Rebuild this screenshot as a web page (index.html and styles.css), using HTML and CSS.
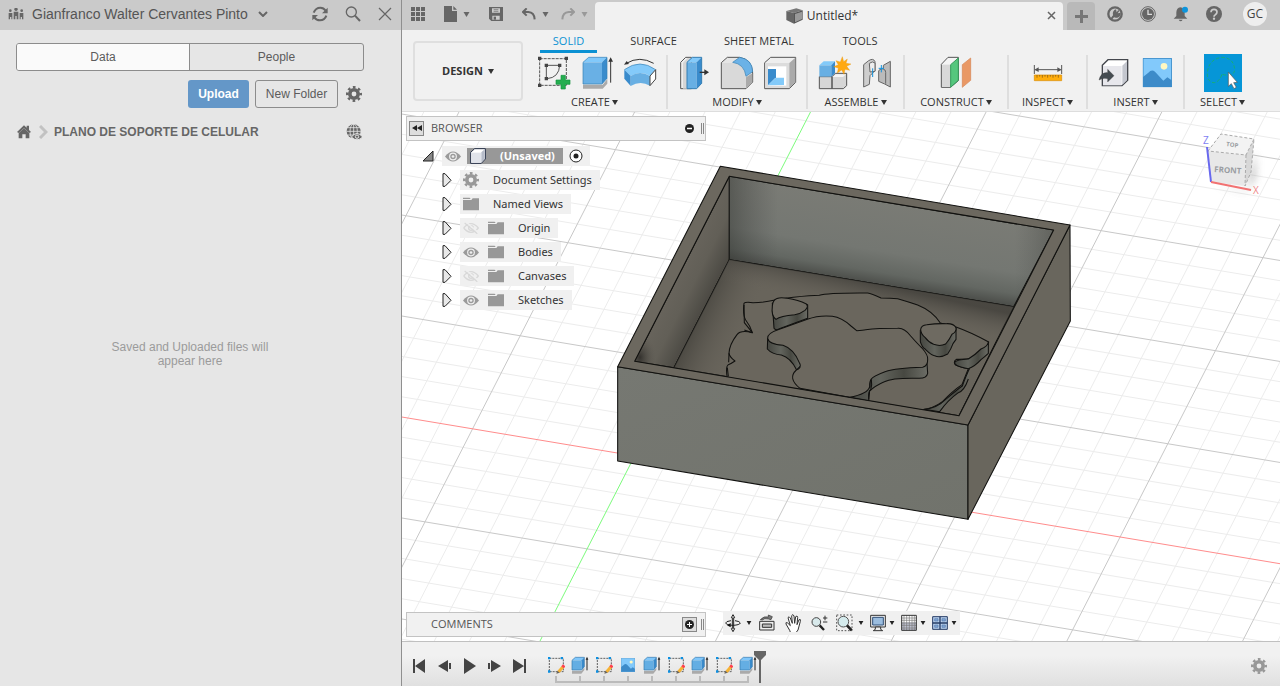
FILE: index.html
```html
<!DOCTYPE html>
<html lang="en">
<head>
<meta charset="utf-8">
<meta name="viewport" content="width=device-width, initial-scale=1">
<title>Untitled*</title>
<link rel="stylesheet" href="styles.css">
</head>
<body>
<svg class="sprite" aria-hidden="true">
  <symbol id="caret" viewBox="0 0 6 5"><path d="M0 0h6L3 5z" fill="currentColor"/></symbol>
  <symbol id="gear" viewBox="0 0 16 16"><g fill="none" stroke="currentColor"><circle cx="8" cy="8" r="4.2" stroke-width="3.6"/><circle cx="8" cy="8" r="6.8" stroke-width="2.4" stroke-dasharray="2.67 2.67" stroke-dashoffset="1.33"/></g></symbol>
  <symbol id="eye" viewBox="0 0 48 32"><path d="M0 16Q24-14 48 16Q24 46 0 16z" fill="#9a9a9a"/><circle cx="24" cy="16" r="10" fill="none" stroke="#f0f0f0" stroke-width="3.5"/><circle cx="24" cy="16" r="4" fill="#eee"/></symbol>
  <symbol id="eye-off" viewBox="0 0 48 36"><g fill="none" stroke="#d8d8d8" stroke-width="4"><path d="M2 18Q24-8 46 18Q24 44 2 18M5 3l38 32"/><circle cx="24" cy="18" r="7"/></g><path d="M9 0l38 32" stroke="#f0f0f0" stroke-width="4"/></symbol>
  <symbol id="folder" viewBox="0 0 48 40"><path d="M0 1h20l3 4H0zM0 8h25l4-5h19v36H0z" fill="#989898"/></symbol>
  <symbol id="expand" viewBox="0 0 30 42"><path d="M3 2h6l18 20L9 40H3z" fill="#e8e8e8" stroke="#222" stroke-width="3"/></symbol>
  <symbol id="sketch" viewBox="0 0 54 54"><path d="M7 7h42v40H7z" fill="none" stroke="#444" stroke-width="2.5" stroke-dasharray="6 3"/><path d="M3 3h7v7H3zM41 3h7v7h-7zM3 43h7v7H3z" fill="#0c8fe0"/><path d="M31 45l15-17 7 6-15 16-9 2z" fill="#f5b335"/><path d="M43 31l5-6 7 6-5 6z" fill="#ff4050"/><path d="M31 44l7 6-10 3z" fill="#666"/></symbol>
  <symbol id="extrude" viewBox="0 0 54 54"><path d="M3 45h28l9-9v6l-9 11H3z" fill="#aaa"/><path d="M3 13l10-9h27l-8 9z" fill="#80c7fb"/><path d="M3 13h29v29H3z" fill="#64aee3"/><path d="M32 13l8-9v28l-8 10z" fill="#398bcc"/><path d="M3 13l10-9h27v28l-8 10H3z" fill="none" stroke="#3578ae" stroke-width="2"/><path d="M48 43V8" stroke="#222" stroke-width="3"/><path d="M44 11l4-9 4 9z" fill="#222"/></symbol>
  <symbol id="picture" viewBox="0 0 88 88"><path d="M1 1h86v86H1z" fill="#82c9fb"/><path d="M1 57l16-13q10-12 20-3l25 27 12-10 13 9v20H1z" fill="#3d8bc9"/><circle cx="64" cy="25" r="10" fill="#fff8c2"/><path d="M1 1h86v86H1z" fill="none" stroke="#398bc9" stroke-width="3"/></symbol>
</svg>

<div class="app">
  <aside class="data-panel">
    <header class="data-header">
      <button class="team" type="button">
        <svg width="16" height="12" viewBox="24 24 48 36"><g fill="#666"><circle cx="48" cy="28" r="5"/><circle cx="31" cy="32" r="4"/><circle cx="65" cy="32" r="4"/><path d="M41 35h14v23h-5V48h-4v10h-5zM26 39h11v19h-3v-7h-4v7h-4zM59 39h11v19h-4v-7h-4v7h-3z"/></g></svg>
        <span>Gianfranco Walter Cervantes Pinto</span>
        <svg class="chevron" width="10" height="6" viewBox="0 0 10 6"><path d="M1 1l4 4 4-4" fill="none" stroke="#666" stroke-width="2"/></svg>
      </button>
      <button class="bare" type="button" aria-label="Refresh"><svg width="16" height="16" viewBox="0 0 48 48"><g fill="none" stroke="#666" stroke-width="6"><path d="M5 20Q11 5 25 5Q35 5 41 14M43 29Q38 43 24 43Q13 43 7 34"/></g><path d="M47 5v17H30zM1 43V27h17z" fill="#666"/></svg></button>
      <button class="bare" type="button" aria-label="Search"><svg width="16" height="16" viewBox="0 0 48 48"><g fill="none" stroke="#666"><circle cx="19" cy="18" r="15" stroke-width="4"/><path d="M30 29l15 16" stroke-width="6"/></g></svg></button>
      <button class="bare" type="button" aria-label="Close"><svg width="14" height="14" viewBox="0 0 14 14"><path d="M1 1l12 12M13 1L1 13" stroke="#666" stroke-width="1.2"/></svg></button>
    </header>
    <div class="data-body">
      <div class="segments"><button class="active" type="button">Data</button><button type="button">People</button></div>
      <div class="actions">
        <button class="upload" type="button">Upload</button>
        <button class="new-folder" type="button">New Folder</button>
        <button class="bare" type="button" aria-label="Settings"><svg class="dark-gear" width="16" height="16"><use href="#gear"/></svg></button>
      </div>
      <nav class="crumbs">
        <a href="#" aria-label="Home"><svg width="14" height="14" viewBox="50 376 42 42"><path d="M50 397l21-20 8 7v-6h7v13l6 6-5 3-16-15-16 15zM55 401l16-15 16 15v15H76v-12H66v12H55z" fill="#666"/></svg></a>
        <svg width="9" height="14" viewBox="0 0 9 14"><path d="M1 1l6 6-6 6" fill="none" stroke="#c2c2c2" stroke-width="3"/></svg>
        <a class="crumb" href="#">PLANO DE SOPORTE DE CELULAR</a>
        <button class="bare" type="button" aria-label="Web view"><svg width="16" height="16" viewBox="0 0 48 48"><circle cx="23" cy="22" r="21" fill="#666"/><g fill="none" stroke="#e6e6e6" stroke-width="2.4"><path d="M23 0v44M1 22h44M5 11h36M5 33h36"/><ellipse cx="23" cy="22" rx="11" ry="22"/></g><path d="M16 39Q33 18 50 39Q33 56 16 39z" fill="#666" stroke="#e6e6e6" stroke-width="3"/><circle cx="33" cy="38" r="5" fill="none" stroke="#e6e6e6" stroke-width="3"/></svg></button>
      </nav>
      <p class="empty">Saved and Uploaded files will<br>appear here</p>
    </div>
  </aside>

  <main class="workspace">
    <header class="topbar">
      <div class="quick">
        <button class="bare q-grid" type="button" aria-label="Data panel"><svg width="14" height="14" viewBox="0 0 14 14"><path d="M0 0h4v4H0zM5 0h4v4H5zM10 0h4v4h-4zM0 5h4v4H0zM5 5h4v4H5zM10 5h4v4h-4zM0 10h4v4H0zM5 10h4v4H5zM10 10h4v4h-4z" fill="#666"/></svg></button>
        <button class="bare q-file" type="button" aria-label="File"><svg width="13" height="16" viewBox="0 0 39 48"><path d="M0 0h24v15h15v33H0zM28 0l11 11H28z" fill="#666"/></svg><svg width="7" height="5"><use href="#caret"/></svg></button>
        <button class="bare q-save" type="button" aria-label="Save"><svg width="14" height="14" viewBox="0 0 42 42"><path d="M0 0h42v42H7l-7-7z" fill="#666"/><path d="M9 4h24v13H9zM10 26h22v12H10z" fill="#ccc"/><path d="M14 8h14M14 13h14" stroke="#666" stroke-width="2"/><path d="M14 29h7v9h-7z" fill="#666"/></svg></button>
        <button class="bare q-undo" type="button" aria-label="Undo"><svg width="14" height="12" viewBox="0 0 42 36"><path d="M14 1L3 12l11 11M4 12h15q18 1 19 22" fill="none" stroke="#666" stroke-width="6"/></svg><svg width="7" height="5"><use href="#caret"/></svg></button>
        <button class="bare q-redo" type="button" aria-label="Redo"><svg width="14" height="12" viewBox="0 0 42 36"><path d="M28 1l11 11-11 11M38 12H23Q5 13 4 34" fill="none" stroke="#999" stroke-width="6"/></svg><svg width="7" height="5"><use href="#caret"/></svg></button>
      </div>
      <div class="doc-tab">
        <svg width="17" height="16" viewBox="0 0 51 48"><path d="M1 9L31 1l19 6-26 8z" fill="#777"/><path d="M1 9l23 6v32L1 36z" fill="#666"/><path d="M24 15l26-8v28L24 47z" fill="#555"/><path d="M27 18l21-7v22l-21 10z" fill="#999"/></svg>
        <span>Untitled*</span>
        <button class="bare doc-close" type="button" aria-label="Close document"><svg width="9" height="9" viewBox="0 0 9 9"><path d="M1 1l7 7M8 1L1 8" stroke="#666" stroke-width="1.5"/></svg></button>
      </div>
      <button class="new-tab" type="button" aria-label="New design"><svg width="13" height="13" viewBox="0 0 13 13"><path d="M6.500 0v13M0 6.500h13" stroke="#777" stroke-width="3"/></svg></button>
      <div class="account">
        <button class="bare" type="button" aria-label="Extensions"><svg width="16" height="16" viewBox="0 0 48 48"><circle cx="24" cy="24" r="20" fill="none" stroke="#666" stroke-width="7"/><path d="M9 39l9-11q-3-14 9-18l2 9 5-7 3 3-5 7 9-2q1 12-10 15-7 1-10-1l-7 8z" fill="#666"/></svg></button>
        <button class="bare" type="button" aria-label="Job status"><svg width="16" height="16" viewBox="0 0 48 48"><circle cx="24" cy="24" r="22" fill="none" stroke="#666" stroke-width="3"/><circle cx="24" cy="24" r="18" fill="#666"/><path d="M24 11v14h12" fill="none" stroke="#ddd" stroke-width="4"/></svg></button>
        <button class="bare" type="button" aria-label="Notifications"><svg width="16" height="16" viewBox="0 0 48 48"><path d="M2 38l8-8V19Q11 5 22 4Q34 5 35 19v11l8 8zM17 41h12q-6 9-12 0" fill="#666"/><circle cx="36" cy="11" r="9" fill="#0c94dc"/></svg></button>
        <button class="bare" type="button" aria-label="Help"><svg width="16" height="16" viewBox="0 0 48 48"><circle cx="24" cy="24" r="24" fill="#666"/><path d="M15 19q0-9 9-9t9 8q0 5-5 8-4 2-4 6" fill="none" stroke="#ccc" stroke-width="5"/><circle cx="24" cy="38" r="3.500" fill="#ccc"/></svg></button>
        <button class="avatar" type="button">GC</button>
      </div>
    </header>

    <section class="ribbon">
      <button class="design" type="button">DESIGN <svg width="6" height="5"><use href="#caret"/></svg></button>
      <div class="tools">
        <nav class="modes">
          <button class="mode active" type="button">SOLID</button><button class="mode" type="button">SURFACE</button><button class="mode wide" type="button">SHEET METAL</button><button class="mode narrow" type="button">TOOLS</button>
        </nav>
        <div class="panels">
          <div class="panel create">
            <div class="icons">
              <svg viewBox="405 165 108 108"><path d="M416 176h80v80h-80z" fill="none" stroke="#555" stroke-width="3" stroke-dasharray="9 3"/><path d="M436 196h40M436 196v40M476 196q-2 37-38 40" fill="none" stroke="#555" stroke-width="3"/><path d="M411 170h10v10h-10zM491 170h10v10h-10zM411 251h10v10h-10zM431 191h10v10h-10zM471 191h10v10h-10zM431 231h10v10h-10z" fill="#444"/><path d="M465 240h15v-14h13v14h14v13h-14v14h-13v-14h-15z" fill="#25ae50" stroke="#169441" stroke-width="2"/></svg>
              <svg viewBox="531 165 108 108"><path d="M543 254h59l14-17v14l-14 15h-59z" fill="#aaa"/><path d="M543 187l17-15h55l-15 15z" fill="#81c9fb"/><path d="M543 187h57v65h-57z" fill="#69b0e5"/><path d="M600 187l15-15v63l-15 17z" fill="#3a8ccc"/><path d="M543 187l17-15h55v63l-15 17h-57z" fill="none" stroke="#347eb4" stroke-width="2"/><path d="M626 248v-70" stroke="#333" stroke-width="3"/><path d="M619 185l7-13 7 13z" fill="#333"/></svg>
              <svg viewBox="663 165 108 108"><path d="M676 190q40-24 82 0" fill="none" stroke="#333" stroke-width="3"/><path d="M669 194l8-11 7 9z" fill="#333"/><path d="M670 209q47-34 94 0l-17 19q-27-18-58 0z" fill="#84cafa"/><path d="M670 209l19 19v30l-19-22z" fill="#398bcc"/><path d="M689 228q28-18 58 0v29q-29-17-58 1z" fill="#68afe3"/><path d="M670 209q47-34 94 0" fill="none" stroke="#347eb4" stroke-width="2"/><path d="M747 228l17-19v28l-17 20z" fill="#fff" stroke="#444" stroke-width="3"/></svg>
            </div>
            <button class="menu" type="button">CREATE <svg width="6" height="5"><use href="#caret"/></svg></button>
          </div>
          <div class="panel modify">
            <div class="icons">
              <svg viewBox="822 165 108 108"><path d="M836 187l15-15h17v94h-32z" fill="#eee" stroke="#555" stroke-width="3"/><path d="M843 188l14-14h11v92h-25z" fill="#d5d5d5"/><path d="M855 187l16-15h28l-15 15z" fill="#84cafa"/><path d="M855 187h29v79h-29z" fill="#67afe4"/><path d="M884 187l15-15v78l-15 16z" fill="#398bcc"/><path d="M855 187l16-15h28v78l-15 16h-29z" fill="none" stroke="#347eb4" stroke-width="3"/><path d="M893 217h20" stroke="#333" stroke-width="4"/><path d="M907 208l14 9-14 9z" fill="#333"/></svg>
              <svg viewBox="954 165 108 108"><path d="M961 188l18-16h36q38 5 40 47v27l-20 20h-74z" fill="#e5e5e5" stroke="#555" stroke-width="3"/><path d="M963 189h34q36 2 38 38v37h-72z" fill="#d9d9d9"/><path d="M1035 232l19-12v26l-19 19z" fill="#aaa"/><path d="M995 187l21-15q38 6 39 43l-20 14q-5-37-40-42" fill="#6bb2e7" stroke="#347eb4" stroke-width="2"/></svg>
              <svg viewBox="1083 165 108 108"><path d="M1091 188l18-16h75v75l-19 19h-74z" fill="#eee" stroke="#555" stroke-width="3"/><path d="M1093 189h72v75h-72z" fill="#dcdcdc"/><path d="M1165 189l18-16v74l-18 18z" fill="#aaa"/><path d="M1101 199h55v58h-55z" fill="#fff"/><path d="M1101 207h24v25l-24 24z" fill="#398bcc"/><path d="M1101 256l23-23h25v22z" fill="#83caf9"/></svg>
            </div>
            <button class="menu" type="button">MODIFY <svg width="6" height="5"><use href="#caret"/></svg></button>
          </div>
          <div class="panel assemble">
            <div class="icons">
              <svg viewBox="1242 165 108 108"><path d="M1252 230h38v36h-38zM1290 230l10-10h34v37l-10 9h-34z" fill="#d6d6d6" stroke="#555" stroke-width="3"/><path d="M1292 231l9-8h31l-9 8z" fill="#f4f4f4"/><path d="M1252 196l13-12h34l-11 12z" fill="#83caf9"/><path d="M1252 196h36v34h-36z" fill="#68afe3"/><path d="M1288 196l11-12v36l-11 10z" fill="#398bcc"/><path d="M1321 170l4 15 11-8-4 13 15 2-13 7 9 12-14-3-3 15-7-13-13 9 3-15-14-4 14-6-7-12 13 4z" fill="#ffa912" stroke="#e89100"/></svg>
              <svg viewBox="60 165 108 108"><g stroke="#666" stroke-width="3"><path d="M74 194l15-12q14-9 19 3v27l-15 15-2 26-17 8z" fill="#cecece"/><path d="M91 190q10-8 17-1v25l-15 2z" fill="#eee"/><path d="M119 213q0-6 14-7v-10l21-12v77l-17-9-18-8z" fill="#bbb"/><path d="M133 208q7 0 7 9v34" fill="none"/></g><path d="M101 231v-26M127 217v-22M119 205h16" stroke="#1592dc" stroke-width="3"/></svg>
            </div>
            <button class="menu" type="button">ASSEMBLE <svg width="6" height="5"><use href="#caret"/></svg></button>
          </div>
          <div class="panel construct">
            <div class="icons"><svg viewBox="297 165 108 108"><path d="M307 193l20-21h31v70l-24 20h-27z" fill="#f4f4f4" stroke="#555" stroke-width="3"/><path d="M309 194h25v67h-25z" fill="#d8d8d8"/><path d="M335 194l23-20v67l-23 21z" fill="#55c77d" stroke="#35995a" stroke-width="3"/><path d="M370 194l25-20v67l-25 21z" fill="#e99865" stroke="#d78451" stroke-width="2"/></svg></div>
            <button class="menu" type="button">CONSTRUCT <svg width="6" height="5"><use href="#caret"/></svg></button>
          </div>
          <div class="panel inspect">
            <div class="icons"><svg viewBox="570 165 108 108"><path d="M583 195v27M665 195v27M587 209h74" stroke="#555" stroke-width="3"/><path d="M583 209l13-7v14zM665 209l-13-7v14z" fill="#555"/><path d="M583 225h82v17h-82z" fill="#ffad0c" stroke="#d98d00" stroke-width="2"/><path d="M591 225v8M599 225v5M607 225v8M615 225v5M623 225v8M631 225v5M639 225v8M647 225v5M655 225v8" stroke="#735019" stroke-width="2"/></svg></div>
            <button class="menu" type="button">INSPECT <svg width="6" height="5"><use href="#caret"/></svg></button>
          </div>
          <div class="panel insert">
            <div class="icons">
              <svg viewBox="774 165 108 108"><path d="M793 196l17-17h59v62l-17 16h-59z" fill="#fff" stroke="#44474d" stroke-width="4"/><path d="M795 198h56v58h-56z" fill="#e7e7ec"/><path d="M853 197l14-14v57l-14 14z" fill="#c4c7cf"/><path d="M783 240q6-24 26-22v-10l19 19-19 19v-10q-15-3-26 4" fill="#444b51" stroke="#333"/></svg>
              <svg viewBox="898 165 108 108"><use href="#picture" x="909" y="174" width="88" height="88"/></svg>
            </div>
            <button class="menu" type="button">INSERT <svg width="6" height="5"><use href="#caret"/></svg></button>
          </div>
          <div class="panel select">
            <div class="icons"><svg class="select-icon" viewBox="1089 162 114 114"><path d="M1089 162h114v114h-114z" fill="#0696d7"/><path d="M1143 223q-9 24-24 25-20-1-20-28 3-42 43-48 37 1 39 38-3 22-38 13" fill="none" stroke="#16ae77" stroke-width="3" stroke-dasharray="10 6"/><path d="M1162 216v43l9-8 8 15 7-4-8-14 11-1z" fill="#fff" stroke="#555" stroke-width="2"/></svg></div>
            <button class="menu" type="button">SELECT <svg width="6" height="5"><use href="#caret"/></svg></button>
          </div>
        </div>
      </div>
    </section>

    <section class="viewport">
      <svg class="scene" viewBox="402 112 878 529" preserveAspectRatio="xMidYMid slice" aria-label="Model view">
        <defs>
          <linearGradient id="back" gradientUnits="userSpaceOnUse" x1="880" y1="155" x2="840" y2="405"><stop offset="0" stop-color="#7a7b75"/><stop offset=".6" stop-color="#747772"/><stop offset=".85" stop-color="#636762"/><stop offset="1" stop-color="#4b4d49"/></linearGradient>
          <linearGradient id="backEdge" x1="0" x2="1"><stop offset="0" stop-color="#30322e" stop-opacity=".45"/><stop offset=".15" stop-color="#444" stop-opacity="0"/><stop offset=".88" stop-color="#444" stop-opacity="0"/><stop offset="1" stop-color="#292b27" stop-opacity=".3"/></linearGradient>
          <linearGradient id="left" gradientUnits="userSpaceOnUse" x1="230" y1="350" x2="350" y2="410"><stop offset="0" stop-color="#69655d"/><stop offset=".5" stop-color="#625f57"/><stop offset="1" stop-color="#4a4842"/></linearGradient>
          <linearGradient id="floorL" gradientUnits="userSpaceOnUse" x1="300" y1="490" x2="430" y2="550"><stop offset="0" stop-color="#44423c" stop-opacity=".75"/><stop offset="1" stop-color="#66625a" stop-opacity="0"/></linearGradient>
          <linearGradient id="floorB" gradientUnits="userSpaceOnUse" x1="820" y1="400" x2="800" y2="490"><stop offset="0" stop-color="#42403b" stop-opacity=".8"/><stop offset="1" stop-color="#66625a" stop-opacity="0"/></linearGradient>
          <linearGradient id="front" x1="0" y1="0" x2="1" y2="1"><stop offset="0" stop-color="#767872"/><stop offset="1" stop-color="#71736c"/></linearGradient>
          <linearGradient id="edge" x1="0" x2="1"><stop offset="0" stop-color="#454640"/><stop offset=".4" stop-color="#62645d"/><stop offset=".7" stop-color="#474841"/><stop offset="1" stop-color="#6c6d66"/></linearGradient>
          <radialGradient id="corner"><stop offset="0" stop-color="#33312d"/><stop offset="1" stop-color="#5d5a52" stop-opacity="0"/></radialGradient>
          <clipPath id="inside"><path d="M388 79l973 161-284 557-973-163z"/></clipPath>
          <filter id="soft" x="-50%" y="-50%" width="200%" height="200%"><feGaussianBlur stdDeviation="4"/></filter>
        </defs>
        <path d="M402 112h878v529H402z" fill="#fff"/>
        <g id="grid"></g>
        <path d="M394 415.700l886 148" stroke="#ff8c8c" fill="none"/>
        <path d="M810.500 112L539 643" stroke="#7cfb7c" fill="none"/>
        <g transform="translate(600 150) scale(.33333)" stroke="#11110f" stroke-width="3.200" stroke-linejoin="round">
          <path d="M53 650l1051 175v283L53 933z" fill="url(#front)"/>
          <path d="M1104 825l306-600 1 288-307 595z" fill="#69665d"/>
          <path d="M361 49l1049 176-306 600L53 650z" fill="#6c685f"/>
          <g clip-path="url(#inside)">
            <path d="M104 634L388 79v250L222 653z" fill="url(#left)"/>
            <ellipse cx="120" cy="622" rx="48" ry="70" fill="url(#corner)" stroke="none"/>
            <path d="M388 79l973 161-120 230-853-141z" fill="url(#back)"/>
            <path d="M388 79l973 161-120 230-853-141z" fill="url(#backEdge)" stroke="none"/>
            <path d="M388 329l853 141-164 327-855-144z" fill="#68645b"/>
            <path d="M388 329l853 141-164 327-855-144z" fill="url(#floorL)" stroke="none"/>
            <path d="M388 329l853 141-164 327-855-144z" fill="url(#floorB)" stroke="none"/>
            <g transform="translate(360 390)">
              <path d="M22 295q-6-35 3-41 10-4 20-11-16-12-18-23 1-26 24-56 11-15 46-6-7-22-20-38-9-15-5-50 3-5 27-2 30 0 66-8 25-5 55-8 55-6 78-6 25-8 145-7 11 1 40 15 30 0 50 2 35 10 60 19 45 18 68 54l47 12q45 16 98 45-2 17-12 25-25 18-38 23-19 5-47 4-12 8 0 18 16 7 36 10-6 15-19 48-27 18-60 52-25 20-65 25l-350-60z" fill="#6a665d"/>
              <path d="M72 75l1 53 24 30-24-8M27 220l-1 27M22 263l3 27" fill="none"/>
              <path d="M805 186v34q-13 12-22 19-19 21-38 27-45-8-41-19 5-8 41-10 20-12 38-30 20-8 22-21z" fill="url(#edge)"/>
              <path d="M745 297q-12 35-30 41-32 23-56 57l-47-7q40-4 65-30 38-32 50-40 12-33 22-53" fill="url(#edge)"/>
              <path d="M157 70l5 75q5 8 20 0l81-30V74z" fill="url(#edge)"/>
              <path d="M162 62q10-13 40-7 33 5 57 17 8 8-4 19-13 10-31 13-42 3-56 14-15-10-11-40 1-11 5-16z" fill="#6e6a61"/>
              <path d="M143 175l-1 32q14 16 42 18 28 8 46 45l12-12v-83z" fill="url(#edge)"/>
              <path d="M620 235l3 45q-3 15-25 15-80-2-105 10-28 12-44 28l-3 30-60-11 64-30v-87z" fill="url(#edge)"/>
              <path d="M240 325q-38-30-11-55 17-7 10-20-18-44-50-54-43-4-46-21-2-15 31-26l88-31q35-13 75-9 28 4 56 29l17 14q20-1 27-3 35-4 96-4 20-2 39 23 22 25 34 36 19 22 17 34 1 20-15 24-80 2-113 13-37 14-40 21-7 8-6 24-5 22-61 32z" fill="#6c685f"/>
              <path d="M446 358q-2-25 6-28 5-15 2-32" fill="none"/>
              <path d="M601 151v34q5 17 15 23 20 19 28 19 16 8 39-5 10-14 16-31l9-13v-34z" fill="url(#edge)"/>
              <path d="M602 148q2-13 18-14 30-4 59-3 22-1 29 12 2 13-12 20-8 17-19 29-17 8-36 1-15-6-26-21-13-10-13-24z" fill="#6e6a61"/>
            </g>
          </g>
          <path d="M388 79l973 161-284 557-973-163z" fill="none"/>
        </g>
      </svg>

      <svg class="viewcube" width="70" height="72" viewBox="1200 130 70 72" aria-label="View cube">
        <path d="M1212 184l35 7 8-40v26l-9 15z" fill="#777" opacity=".6" filter="url(#soft)"/>
        <path d="M1208 151l13-17 33 5-8 16z" fill="#f3f3f3"/><path d="M1208 151l38 4-1 31-34-4z" fill="#e8e8e8"/><path d="M1246 155l8-16-3 33-6 14z" fill="#d8d8d8"/>
        <path d="M1208 151l13-17 33 5-8 16zM1246 155l-1 31 6-14 3-33" fill="none" stroke="#aaa" stroke-dasharray="3 2"/>
        <path d="M1207 147l4 35" stroke="#6868ee" stroke-width="2"/><path d="M1211 182l40 8" stroke="#f27272" stroke-width="2"/>
        <g class="cube-text"><text x="1203" y="144" fill="#7f7ff2">Z</text><text x="1253" y="194" fill="#f08989">X</text></g>
        <text class="face" x="1214" y="172" transform="rotate(4 1214 172)">FRONT</text><text class="face small" x="1226" y="146" transform="rotate(8 1226 146)">TOP</text>
      </svg>

      <section class="browser">
        <header class="dock"><button class="dock-button" type="button" aria-label="Collapse browser"><svg width="10" height="6" viewBox="0 0 10 6"><path d="M5 0v6L0 3zM10 0v6L5 3z" fill="#222"/></svg></button><span>BROWSER</span><button class="bare" type="button" aria-label="Minimize"><svg width="9" height="9" viewBox="0 0 9 9"><circle cx="4.500" cy="4.500" r="4.500" fill="#222"/><path d="M2 4.500h5" stroke="#fff" stroke-width="1.500"/></svg></button><i class="grip"></i></header>
        <ul class="tree">
          <li class="root"><button class="bare" type="button" aria-label="Collapse"><svg width="12" height="12" viewBox="0 0 12 12"><path d="M11 1v10H1z" fill="#888" stroke="#222"/></svg></button><div class="node"><svg width="16" height="11"><use href="#eye"/></svg><div class="unsaved"><svg width="16" height="16" viewBox="0 0 48 48"><path d="M2 13L14 2h32v31L34 46H2z" fill="#fff" stroke="#253047" stroke-width="3"/><path d="M4 14h29v30H4z" fill="#e0e3ea"/><path d="M34 13L44 4v29L34 43z" fill="#b6bcc9"/></svg><b>(Unsaved)</b></div><svg width="14" height="14" viewBox="0 0 14 14"><circle cx="7" cy="7" r="6" fill="#fff" stroke="#222"/><circle cx="7" cy="7" r="2.500" fill="#222"/></svg></div></li>
          <li><button class="bare" type="button" aria-label="Expand"><svg width="10" height="14"><use href="#expand"/></svg></button><div class="node"><svg class="soft-gear" width="16" height="16"><use href="#gear"/></svg><span>Document Settings</span></div></li>
          <li><button class="bare" type="button" aria-label="Expand"><svg width="10" height="14"><use href="#expand"/></svg></button><div class="node"><svg width="16" height="14"><use href="#folder"/></svg><span>Named Views</span></div></li>
          <li><button class="bare" type="button" aria-label="Expand"><svg width="10" height="14"><use href="#expand"/></svg></button><div class="node"><svg width="16" height="12"><use href="#eye-off"/></svg><svg width="16" height="14"><use href="#folder"/></svg><span>Origin</span></div></li>
          <li><button class="bare" type="button" aria-label="Expand"><svg width="10" height="14"><use href="#expand"/></svg></button><div class="node"><svg width="16" height="11"><use href="#eye"/></svg><svg width="16" height="14"><use href="#folder"/></svg><span>Bodies</span></div></li>
          <li><button class="bare" type="button" aria-label="Expand"><svg width="10" height="14"><use href="#expand"/></svg></button><div class="node"><svg width="16" height="12"><use href="#eye-off"/></svg><svg width="16" height="14"><use href="#folder"/></svg><span>Canvases</span></div></li>
          <li><button class="bare" type="button" aria-label="Expand"><svg width="10" height="14"><use href="#expand"/></svg></button><div class="node"><svg width="16" height="11"><use href="#eye"/></svg><svg width="16" height="14"><use href="#folder"/></svg><span>Sketches</span></div></li>
        </ul>
      </section>

      <section class="dock comments"><span>COMMENTS</span><button class="dock-button" type="button" aria-label="Add comment"><svg width="9" height="9" viewBox="0 0 9 9"><circle cx="4.500" cy="4.500" r="4.500" fill="#222"/><path d="M2 4.500h5M4.500 2v5" stroke="#fff"/></svg></button><i class="grip"></i></section>

      <nav class="view-tools" aria-label="View tools">
        <button class="with-menu orbit" type="button" aria-label="Orbit"><svg width="16" height="18" viewBox="0 0 48 54"><g fill="#fff" stroke="#222" stroke-width="3"><path d="M24 2l5 9h-3v33h3l-5 9-5-9h3V11h-3z"/></g><path d="M18 20q-16 2-16 7 2 6 22 7 20-1 22-7-1-5-16-7" fill="none" stroke="#222" stroke-width="3"/><path d="M6 34l11-7v13z" fill="#111"/></svg><svg width="6" height="4"><use href="#caret"/></svg></button>
        <button type="button" aria-label="Look at"><svg width="16" height="18" viewBox="0 0 48 54"><path d="M2 22h43v26H2z" fill="#eee" stroke="#333" stroke-width="3"/><path d="M10 30h28v10H10z" fill="#bbb" stroke="#333" stroke-width="3"/><path d="M4 17Q15 5 28 9V3l12 5-4 9-8-2q-12-3-18 3z" fill="#777" stroke="#333" stroke-width="2"/></svg></button>
        <button type="button" aria-label="Pan"><svg width="16" height="18" viewBox="0 0 48 54"><path d="M14 49L3 30q-2-7 5-3l8 8-7-24q3-6 7 1l6 16-2-23q4-7 7 1l2 22 3-20q5-5 6 2l-2 22 6-15q6-3 4 5l-7 26-7 9H17z" fill="#fff" stroke="#333" stroke-width="3" stroke-linejoin="round"/></svg></button>
        <button type="button" aria-label="Zoom"><svg width="17" height="18" viewBox="0 0 51 54"><circle cx="16" cy="24" r="13" fill="#d8e9eb" stroke="#444" stroke-width="3"/><path d="M26 34l13 14" stroke="#222" stroke-width="7"/><path d="M36 12h13M42 5v14M36 24h13" stroke="#333" stroke-width="3"/></svg></button>
        <button class="with-menu fit" type="button" aria-label="Fit"><svg width="17" height="18" viewBox="0 0 51 54"><path d="M2 3h46v47H2z" fill="none" stroke="#555" stroke-width="3" stroke-dasharray="5 5"/><circle cx="22" cy="23" r="16" fill="#d5ebed" stroke="#555" stroke-width="3"/><path d="M33 34l14 15" stroke="#222" stroke-width="8"/></svg><svg width="6" height="4"><use href="#caret"/></svg></button>
        <button class="with-menu" type="button" aria-label="Display settings"><svg width="16" height="18" viewBox="0 0 48 54"><path d="M2 4h44v35H2z" fill="#eee" stroke="#333" stroke-width="3"/><path d="M8 10h32v23H8z" fill="#9bbddf" stroke="#315078" stroke-width="3"/><path d="M16 39h16v7l6 4H10l6-4z" fill="#eee" stroke="#333" stroke-width="3"/></svg><svg width="6" height="4"><use href="#caret"/></svg></button>
        <button class="with-menu" type="button" aria-label="Grid settings"><svg width="16" height="18" viewBox="0 0 48 54"><path d="M2 4h44v45H2z" fill="#fff"/><path d="M2 25h44v24H2z" fill="#bec1d0"/><path d="M9 4v45M17 4v45M25 4v45M33 4v45M40 4v45M2 12h44M2 19h44M2 27h44M2 34h44M2 42h44" stroke="#777" stroke-width="2"/><path d="M2 4h44v45H2z" fill="none" stroke="#333" stroke-width="3"/></svg><svg width="6" height="4"><use href="#caret"/></svg></button>
        <button class="with-menu" type="button" aria-label="Viewports"><svg width="16" height="18" viewBox="0 0 48 54"><path d="M2 8h44v38H2z" fill="#b9d0eb" stroke="#263d66" stroke-width="3"/><path d="M24 8v38M2 27h44" stroke="#263d66" stroke-width="4"/><path d="M8 14h10v7H8zM30 14h10v7H30zM8 33h10v7H8zM30 33h10v7H30z" fill="#85a8d4" stroke="#5378ad" stroke-width="2"/></svg><svg width="6" height="4"><use href="#caret"/></svg></button>
      </nav>
    </section>

    <footer class="timeline">
      <div class="playback">
        <button type="button" aria-label="Start"><svg width="13" height="14" viewBox="0 0 13 14"><path d="M0 0h2v14H0zM12 0v14L2 7z"/></svg></button>
        <button type="button" aria-label="Step back"><svg width="13" height="14" viewBox="0 0 13 14"><path d="M10 1v12L0 7zM11 4h2v6h-2z"/></svg></button>
        <button type="button" aria-label="Play"><svg width="12" height="16" viewBox="0 0 12 16"><path d="M0 0v16l12-8z"/></svg></button>
        <button type="button" aria-label="Step forward"><svg width="13" height="14" viewBox="0 0 13 14"><path d="M3 1v12l10-6zM0 4h2v6H0z"/></svg></button>
        <button type="button" aria-label="End"><svg width="13" height="14" viewBox="0 0 13 14"><path d="M11 0h2v14h-2zM0 0v14l11-7z"/></svg></button>
      </div>
      <ol class="features">
        <li><svg><use href="#sketch"/></svg></li><li><svg><use href="#extrude"/></svg></li><li><svg><use href="#sketch"/></svg></li><li><svg class="canvas-feature"><use href="#picture"/></svg></li><li><svg><use href="#extrude"/></svg></li><li><svg><use href="#sketch"/></svg></li><li><svg><use href="#extrude"/></svg></li><li><svg><use href="#sketch"/></svg></li><li><svg><use href="#extrude"/></svg></li>
      </ol>
      <svg class="marker" width="12" height="32" viewBox="0 0 12 32"><path d="M0 0h12v4L7 9v23H5V9L0 4z" fill="#666"/></svg>
      <button class="bare timeline-settings" type="button" aria-label="Timeline settings"><svg class="soft-gear" width="16" height="16"><use href="#gear"/></svg></button>
    </footer>
  </main>
</div>
<script src="grid.js"></script>
</body>
</html>
```
FILE: styles.css
```css
* { box-sizing: border-box; }
body { margin: 0; background: #fff; color: #333; font: 12px/16px "Open Sans", "Noto Sans", sans-serif; }
button { font: inherit; color: inherit; padding: 0; border: 0; background: none; }
svg { display: block; flex: none; }
a { color: inherit; text-decoration: none; }
.sprite { position: absolute; width: 0; height: 0; }
.bare { display: flex; align-items: center; justify-content: center; flex: none; }
.app { display: grid; grid-template-columns: 402px minmax(0, 1fr); height: 100vh; overflow: hidden; }

.data-panel { background: #e6e6e6; border-right: 1px solid #8f8f8f; color: #5c5c5c; font-family: "Liberation Sans", Arial, sans-serif; }
.data-header { display: flex; align-items: center; gap: 17px; height: 30px; padding: 0 9px 2px 8px; background: #cacaca; }
.team { display: flex; align-items: center; gap: 8px; flex: 1; font-size: 14px; color: #555; }
.chevron { margin-left: 2px; }
.data-body { padding: 13px 37px 0 16px; }
.segments { display: grid; grid-template-columns: 1fr 1fr; height: 28px; border: 1px solid #8c8c8c; border-radius: 3px; overflow: hidden; }
.segments .active { background: #fafafa; border-right: 1px solid #8c8c8c; }
.actions { display: flex; justify-content: flex-end; align-items: center; gap: 6px; padding: 9px 2px 0 0; }
.upload { width: 61px; height: 28px; border-radius: 3px; background: #6497c8; color: #fff; font-weight: 700; }
.new-folder { width: 83px; height: 28px; border: 1px solid #8c8c8c; border-radius: 3px; }
.actions .bare { margin-left: 2px; }
.dark-gear { color: #666; }
.crumbs { display: flex; align-items: center; gap: 8px; padding: 16px 2px 0 1px; }
.crumb { flex: 1; font-weight: 700; color: #666; }
.crumbs > svg { margin-right: -2px; }
.empty { margin: 200px 0 0; text-align: center; line-height: 14px; color: #9b9b9b; }

.workspace { display: flex; flex-direction: column; min-width: 0; background: #f1f1f1; }
.topbar { display: flex; height: 30px; flex: none; background: #cacaca; color: #666; }
.quick { display: flex; align-items: center; width: 193px; padding: 0 0 2px 9px; flex: none; }
.quick .bare { gap: 6px; }
.q-file { margin-left: 19px; }
.q-save { margin-left: 19px; }
.q-undo { margin-left: 19px; }
.q-redo { margin-left: 12px; color: #999; }
.doc-tab { position: relative; display: flex; flex: 1; align-items: center; justify-content: center; gap: 4px; margin-top: 2px; padding-right: 14px; border-radius: 4px 4px 0 0; background: #f1f1f1; color: #333; }
.doc-close { position: absolute; right: 7px; top: 9px; }
.new-tab { display: flex; align-items: center; justify-content: center; width: 28px; margin: 2px 0 0 4px; border-radius: 4px 4px 0 0; background: #b9b9b9; }
.account { display: flex; align-items: center; gap: 17px; padding: 0 13px 2px 12px; }
.avatar { width: 24px; height: 24px; margin-left: 4px; border-radius: 50%; background: #eee; color: #444; }

.ribbon { display: flex; flex: none; height: 82px; border-bottom: 1px solid #ddd; }
.design { display: flex; align-items: center; justify-content: center; gap: 5px; width: 110px; height: 60px; margin: 11px 0 0 11px; border: 2px solid #dfdfdf; border-radius: 4px; font-size: 11px; font-weight: 700; }
.tools { flex: 1; min-width: 0; }
.modes { display: flex; height: 23px; padding-left: 17px; gap: 28px; font-size: 11px; }
.mode { min-width: 57px; padding: 2px 0 0; border-bottom: 3px solid transparent; }
.wide { padding: 2px 14px 0; }
.narrow { min-width: 48px; }
.mode.active { color: #0b91d3; border-color: #0b91d3; }
.panels { display: flex; }
.panel { display: flex; flex-direction: column; align-items: center; height: 54px; margin-top: 2px; border-right: 2px solid #dedede; }
.icons { display: flex; gap: 7px; height: 36px; }
.icons svg { width: 36px; height: 36px; }
.icons .select-icon { width: 38px; height: 38px; margin-top: -1px; }
.menu { display: flex; align-items: center; gap: 2px; height: 16px; margin-top: 3px; font-size: 11px; white-space: nowrap; }
.create { width: 145px; }
.create .icons { padding-left: 5px; }
.modify { width: 140px; }
.assemble { width: 97px; }
.construct { width: 104px; }
.inspect { width: 79px; }
.insert { width: 97px; }
.select { width: 75px; border: 0; }

.viewport { position: relative; flex: 1; min-height: 0; overflow: hidden; }
.scene { width: 100%; height: 100%; }
.viewcube { position: absolute; top: 18px; right: 10px; }
.cube-text { font: 10px "Open Sans", sans-serif; }
.face { font: 700 8px "Open Sans", sans-serif; fill: #999ca1; }
.face.small { font-size: 6px; }
.browser { position: absolute; top: 4px; left: 4px; width: 300px; font-size: 11px; }
.dock { display: flex; align-items: center; height: 25px; padding: 0 1px 1px 2px; border: 1px solid #c3c3c3; background: #f1f1f1; color: #555; font-size: 11px; }
.dock span { flex: 1; margin-left: 7px; }
.dock-button { display: flex; align-items: center; justify-content: center; width: 15px; height: 15px; border: 1px solid #888; background: #ddd; }
.grip { width: 3px; height: 11px; margin-left: 7px; border: solid #888; border-width: 0 1px; }
.tree { display: flex; flex-direction: column; align-items: flex-start; gap: 4px; margin: 5px 0 0; padding: 0; list-style: none; font-family: "Noto Sans", "Open Sans", sans-serif; }
.tree li { display: flex; align-items: center; gap: 8px; padding-left: 36px; }
.tree .root { padding-left: 16px; }
.node { display: flex; align-items: center; gap: 9px; height: 20px; padding: 0 8px 0 3px; background: #f0f0f0; color: #333; }
.node span { margin-left: 5px; }
.root .node { gap: 6px; padding-right: 7px; }
.unsaved { display: flex; align-items: center; gap: 14px; height: 16px; padding: 0 8px 0 3px; background: #989898; color: #fff; font-family: "Open Sans", sans-serif; }
.comments { position: absolute; left: 4px; bottom: 4px; width: 300px; }
.comments span { margin-left: 22px; }
.comments .grip { margin-left: 4px; }
.view-tools { position: absolute; left: 321px; bottom: 6px; display: flex; height: 24px; background: #f0f0f0; color: #222; }
.view-tools button { display: flex; align-items: center; justify-content: center; width: 26px; }
.view-tools .with-menu { gap: 3px; width: 31px; }
.view-tools .orbit { gap: 5px; }
.view-tools .fit { gap: 5px; width: 35px; }

.timeline { display: flex; flex: none; height: 45px; border-top: 1px solid #c0c0c0; background: linear-gradient(#f1f1f1 30%, #e0e0e0); }
.playback { display: flex; align-items: center; padding: 4px 0 0 5px; fill: #444; }
.playback button { display: flex; justify-content: center; width: 25px; }
.features { display: flex; margin: 0 0 0 12px; padding: 14px 0 0; list-style: none; }
.features li { display: flex; flex-direction: column; align-items: center; width: 24px; }
.features svg { width: 18px; height: 18px; }
.features .canvas-feature { width: 14px; height: 14px; margin: 2px 0; }
.features li::after { content: ""; width: 100%; height: 7px; margin-top: 2px; background: linear-gradient(#bbb, #bbb) 50% 0 / 2px 7px no-repeat, linear-gradient(#bbb, #bbb) 0 100% / 100% 2px no-repeat; }
.features li:first-child::after { background-size: 2px 7px, 50% 2px; background-position: 50% 0, 100% 100%; }
.features li:last-child::after { background-size: 2px 7px, 50% 2px; }
.marker { margin: 9px 0 0 -6px; }
.timeline-settings { margin: 4px 13px 0 auto; }
.soft-gear { color: #989898; }
```
FILE: grid.js
```js
const grid = document.getElementById("grid");
const origin = { x: 634.5, y: 455.8 };
const across = { x: 32.38, y: 5.4 };
const down = { x: -9.52, y: 18.61 };

function addLine(along, step, index) {
  const line = document.createElementNS("http://www.w3.org/2000/svg", "line");
  const reach = 60;
  const x = origin.x + step.x * index;
  const y = origin.y + step.y * index;
  line.setAttribute("x1", x - along.x * reach);
  line.setAttribute("y1", y - along.y * reach);
  line.setAttribute("x2", x + along.x * reach);
  line.setAttribute("y2", y + along.y * reach);
  line.setAttribute("stroke", index % 5 === 0 ? "#c8c8c8" : "#ececec");
  grid.append(line);
}

for (const major of [false, true]) {
  for (let i = -45; i <= 45; i++) {
    if ((i % 5 === 0) === major && i !== 0) {
      addLine(across, down, i);
      addLine(down, across, i);
    }
  }
}
```
